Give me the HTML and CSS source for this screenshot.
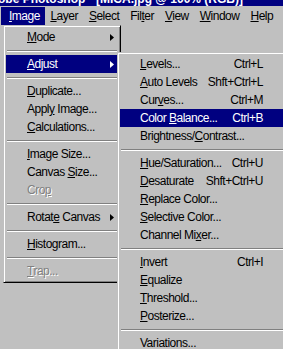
FILE: index.html
```html
<!DOCTYPE html>
<html>
<head>
    <title>Photoshop - Image menu</title>
    <link rel="stylesheet" href="styles.css">
</head>
<body>
    <div class="screen">
        <div class="titlebar">
            <span class="title">Adobe Photoshop - [MICA.jpg @ 100% (RGB)]</span>
        </div>

        <div class="menubar">
            <span class="top-item open"><u>I</u>mage</span>
            <span class="top-item"><u>L</u>ayer</span>
            <span class="top-item"><u>S</u>elect</span>
            <span class="top-item">Fil<u>t</u>er</span>
            <span class="top-item"><u>V</u>iew</span>
            <span class="top-item"><u>W</u>indow</span>
            <span class="top-item"><u>H</u>elp</span>
        </div>

        <!-- Image menu -->
        <div class="menu main-menu">
            <div class="item">
                <span class="label"><u>M</u>ode</span>
                <svg class="arrow" viewBox="0 0 4 7"><polygon points="0,0 4,3.5 0,7"/></svg>
            </div>
            <div class="sep"></div>
            <div class="item active">
                <span class="label"><u>A</u>djust</span>
                <svg class="arrow" viewBox="0 0 4 7"><polygon points="0,0 4,3.5 0,7"/></svg>
            </div>
            <div class="sep"></div>
            <div class="item"><span class="label"><u>D</u>uplicate...</span></div>
            <div class="item"><span class="label">Appl<u>y</u> Image...</span></div>
            <div class="item"><span class="label"><u>C</u>alculations...</span></div>
            <div class="sep"></div>
            <div class="item"><span class="label"><u>I</u>mage Size...</span></div>
            <div class="item"><span class="label">Canvas <u>S</u>ize...</span></div>
            <div class="item disabled"><span class="label">Cro<u>p</u></span></div>
            <div class="sep"></div>
            <div class="item">
                <span class="label">Rotat<u>e</u> Canvas</span>
                <svg class="arrow" viewBox="0 0 4 7"><polygon points="0,0 4,3.5 0,7"/></svg>
            </div>
            <div class="sep"></div>
            <div class="item"><span class="label"><u>H</u>istogram...</span></div>
            <div class="sep"></div>
            <div class="item disabled"><span class="label"><u>T</u>rap...</span></div>
        </div>

        <!-- Adjust submenu -->
        <div class="menu sub-menu">
            <div class="item"><span class="label"><u>L</u>evels...</span><span class="key">Ctrl+L</span></div>
            <div class="item"><span class="label"><u>A</u>uto Levels</span><span class="key">Shft+Ctrl+L</span></div>
            <div class="item"><span class="label">Cur<u>v</u>es...</span><span class="key">Ctrl+M</span></div>
            <div class="item active"><span class="label">Color <u>B</u>alance...</span><span class="key">Ctrl+B</span></div>
            <div class="item"><span class="label">Brightness/<u>C</u>ontrast...</span></div>
            <div class="sep"></div>
            <div class="item"><span class="label"><u>H</u>ue/Saturation...</span><span class="key">Ctrl+U</span></div>
            <div class="item"><span class="label"><u>D</u>esaturate</span><span class="key">Shft+Ctrl+U</span></div>
            <div class="item"><span class="label"><u>R</u>eplace Color...</span></div>
            <div class="item"><span class="label"><u>S</u>elective Color...</span></div>
            <div class="item"><span class="label">Channel Mi<u>x</u>er...</span></div>
            <div class="sep"></div>
            <div class="item"><span class="label"><u>I</u>nvert</span><span class="key">Ctrl+I</span></div>
            <div class="item"><span class="label"><u>E</u>qualize</span></div>
            <div class="item"><span class="label"><u>T</u>hreshold...</span></div>
            <div class="item"><span class="label"><u>P</u>osterize...</span></div>
            <div class="sep"></div>
            <div class="item"><span class="label">Variations...</span></div>
        </div>
    </div>
</body>
</html>
```

FILE: styles.css
```css
body {
    margin: 0;
    background-color: #c0c0c0;
    font-family: "Liberation Sans", Arial, sans-serif;
    font-size: 12px;
    letter-spacing: -0.5px;
    color: #000;
}
.screen {
    position: relative;
    width: 283px;
    height: 349px;
    overflow: hidden;
}
.titlebar {
    height: 6px;
    background-color: #000080;
    color: white;
    font-weight: bold;
    font-size: 12px;
    letter-spacing: 0;
    white-space: nowrap;
    overflow: hidden;
}
.title {
    display: block;
    line-height: 14px;
    margin-top: -8px;
    margin-left: -18px;
}
.menubar {
    display: flex;
    height: 18px;
    padding: 1px 0 0 1px;
}
.top-item {
    line-height: 18px;
    padding: 0 5.5px;
}
.top-item.open {
    background-color: #000080;
    color: white;
    padding: 0 5px 0 8px;
}
u {
    text-underline-offset: 1px;
}

/* win98 style popup menus */
.menu {
    position: absolute;
    background-color: #c0c0c0;
    border: 1px solid;
    border-color: #c0c0c0 #000 #000 #c0c0c0;
    box-shadow: inset 1px 1px #fff, inset -1px -1px #808080;
    padding: 2px;
}
.main-menu {
    left: 3px;
    top: 25px;
    width: 112px;
}
.sub-menu {
    left: 117px;
    top: 52px;
    width: 164px;
}
.item {
    display: flex;
    align-items: center;
    height: 18px;
    padding: 0 4px 0 21px;
    white-space: nowrap;
}
.sub-menu .item {
    padding: 0 21px 0 20px;
}
.item.active {
    background-color: #000080;
    color: white;
}
.item.disabled {
    color: #808080;
    text-shadow: 1px 1px 0 #fff;
}
.label {
    flex: 1;
}
.key {
    margin-left: 8px;
}
.arrow {
    width: 4px;
    height: 7px;
    fill: currentColor;
}
.sep {
    height: 0;
    margin: 4px 1px 3px;
    border-top: 1px solid #808080;
    border-bottom: 1px solid #fff;
}
```
